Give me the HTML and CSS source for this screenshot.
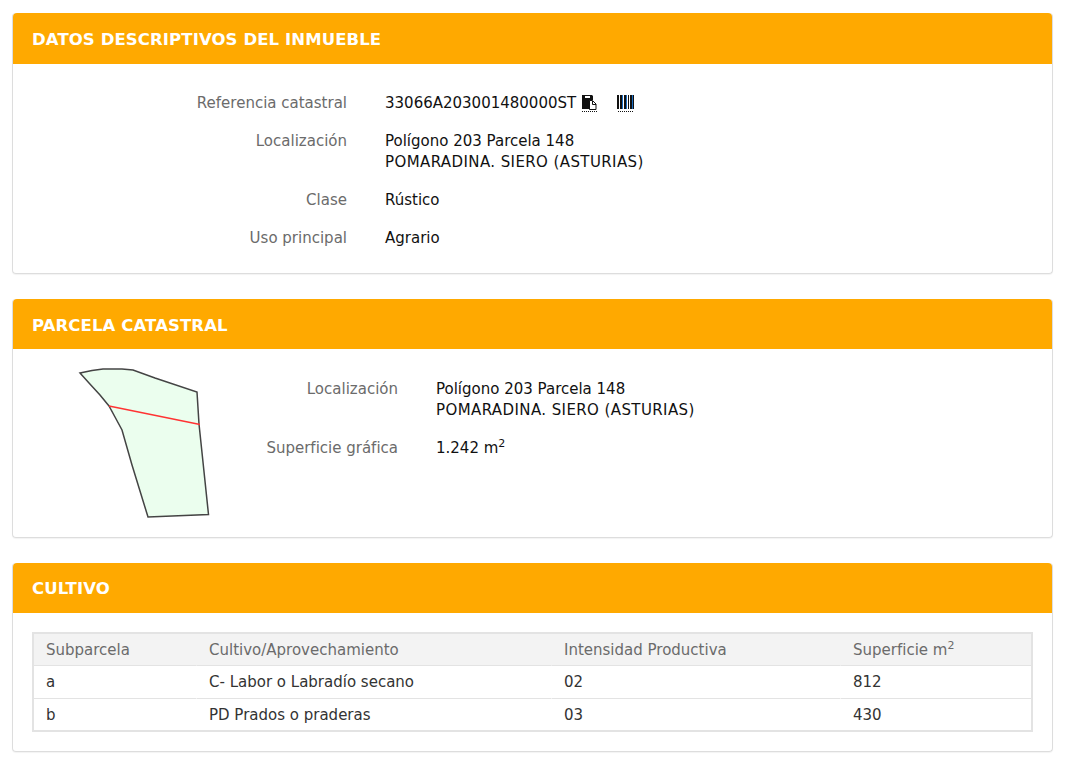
FILE: index.html
```html
<!DOCTYPE html>
<html lang="es">
<head>
  <meta charset="UTF-8">
  <title>Datos descriptivos del inmueble</title>
  <link rel="stylesheet" href="styles.css">
</head>
<body>
  <!-- Datos descriptivos -->
  <div class="panel">
    <div class="panel-heading">DATOS DESCRIPTIVOS DEL INMUEBLE</div>
    <div class="panel-body datos">
      <div class="label">Referencia catastral</div>
      <div class="value ref">33066A203001480000ST
        <svg class="icon-copy" width="16" height="17" viewBox="0 0 16 17">
          <path d="M1 0h10l1 1v4H9v9H1z" fill="#111"/>
          <path d="M4 1h5v2H4z" fill="#fff"/>
          <path d="M8.500 5.500h3l3.500 3.500v5.500H8.500z" fill="#fff" stroke="#111"/>
          <path d="M11.500 6v3.500H15" fill="none" stroke="#111"/>
          <path d="M1 16.500h15" stroke="#111" stroke-dasharray="1 1"/>
        </svg>
        <svg class="icon-barcode" width="17" height="17" viewBox="0 0 17 17">
          <path d="M0 0h2v14H0zM3 0h2v14H3zM7 0h2v14H7zM11 0h1v14h-1zM13 0h2v14h-2zM16 0h1v14h-1z" fill="#111"/>
          <path d="M5 0h1v14H5zM9 0h1v14H9zM15 0h1v14h-1z" fill="#1c6fc4"/>
          <path d="M1 16.500h16" stroke="#111" stroke-dasharray="1 1"/>
        </svg>
      </div>
      <div class="label">Localización</div>
      <div class="value">Polígono 203 Parcela 148<br><span class="upper">POMARADINA. SIERO (ASTURIAS)</span></div>
      <div class="label">Clase</div>
      <div class="value">Rústico</div>
      <div class="label">Uso principal</div>
      <div class="value">Agrario</div>
    </div>
  </div>

  <!-- Parcela -->
  <div class="panel">
    <div class="panel-heading">PARCELA CATASTRAL</div>
    <div class="panel-body parcela">
      <svg class="plano" width="140" height="160" viewBox="75 364 140 160">
        <path d="M80 373 L92 370.500 L103 369 L122 369 L133 370 L155 378 L197 392 L199 424 L208.500 514.500 L148 517 L132 465 L122 430 L115 417 L109 406 L100 395 L89 383 Z" fill="#ebfeee" stroke="#444" stroke-width="1.500"/>
        <path d="M109 406 L200 424.500" stroke="#f33" stroke-width="1.400"/>
      </svg>
      <div class="datos-parcela">
        <div class="label">Localización</div>
        <div class="value">Polígono 203 Parcela 148<br><span class="upper">POMARADINA. SIERO (ASTURIAS)</span></div>
        <div class="label">Superficie gráfica</div>
        <div class="value">1.242 m<sup>2</sup></div>
      </div>
    </div>
  </div>

  <!-- Cultivo -->
  <div class="panel">
    <div class="panel-heading">CULTIVO</div>
    <div class="panel-body cultivo">
      <table>
        <tr>
          <th class="col-sub">Subparcela</th>
          <th class="col-cult">Cultivo/Aprovechamiento</th>
          <th class="col-int">Intensidad Productiva</th>
          <th>Superficie m<sup>2</sup></th>
        </tr>
        <tr>
          <td>a</td>
          <td>C- Labor o Labradío secano</td>
          <td>02</td>
          <td>812</td>
        </tr>
        <tr>
          <td>b</td>
          <td>PD Prados o praderas</td>
          <td>03</td>
          <td>430</td>
        </tr>
      </table>
    </div>
  </div>
</body>
</html>
```

FILE: styles.css
```css
body {
  margin: 0;
  padding: 13px 19px 0 12px;
  font-family: Tahoma, "DejaVu Sans", sans-serif;
  font-size: 15px;
  line-height: 21px;
  color: #111;
  background: #fff;
}
.panel {
  border: 1px solid #ddd;
  border-top: 0;
  border-radius: 4px;
  margin-bottom: 25px;
  box-shadow: 0 1px 1px rgba(0,0,0,0.05);
}
.panel-heading {
  background: #ffa900;
  color: #fff;
  font-weight: bold;
  font-size: 16.5px;
  letter-spacing: 0.1px;
  line-height: 22px;
  padding: 15px 19px 13px;
  border-radius: 4px 4px 0 0;
}
.panel:nth-child(1) .panel-heading {
  padding-top: 16px;
}
.panel:nth-child(2) .panel-heading {
  padding: 16px 19px 12px;
}
.label {
  color: #6b6b6b;
  text-align: right;
}
.upper {
  letter-spacing: 0.4px;
}

/* Datos descriptivos */
.datos {
  display: grid;
  grid-template-columns: 334px 1fr;
  column-gap: 38px;
  row-gap: 17px;
  padding: 29px 0 24px;
}
.ref svg {
  vertical-align: -4px;
}
.icon-copy {
  margin-right: 15px;
}

/* Parcela */
.parcela {
  display: flex;
  height: 188px;
}
.plano {
  margin: 15px 0 0 62px;
}
.datos-parcela {
  display: grid;
  grid-template-columns: 183px auto;
  column-gap: 38px;
  row-gap: 17px;
  align-content: start;
  margin-top: 30px;
}
sup {
  font-size: 11px;
  line-height: 0;
}

/* Cultivo */
.cultivo {
  padding: 19px;
}
table {
  width: 100%;
  border-collapse: separate;
  border-spacing: 0;
  border: 2px solid #e3e3e3;
}
th, td {
  text-align: left;
  font-weight: normal;
  padding: 6px 12px 5px;
  color: #333;
  border-bottom: 1px solid #e3e3e3;
  border-right: 1px solid #fff;
}
th {
  background: #f3f3f3;
  color: #6b6b6b;
  padding-bottom: 4px;
  border-right-color: #f3f3f3;
}
tr:last-child td {
  padding-bottom: 4px;
  border-bottom: 0;
}
th:last-child, td:last-child {
  border-right: 0;
}
.col-sub {
  width: 138px;
}
.col-cult {
  width: 330px;
}
.col-int {
  width: 264px;
}
```
